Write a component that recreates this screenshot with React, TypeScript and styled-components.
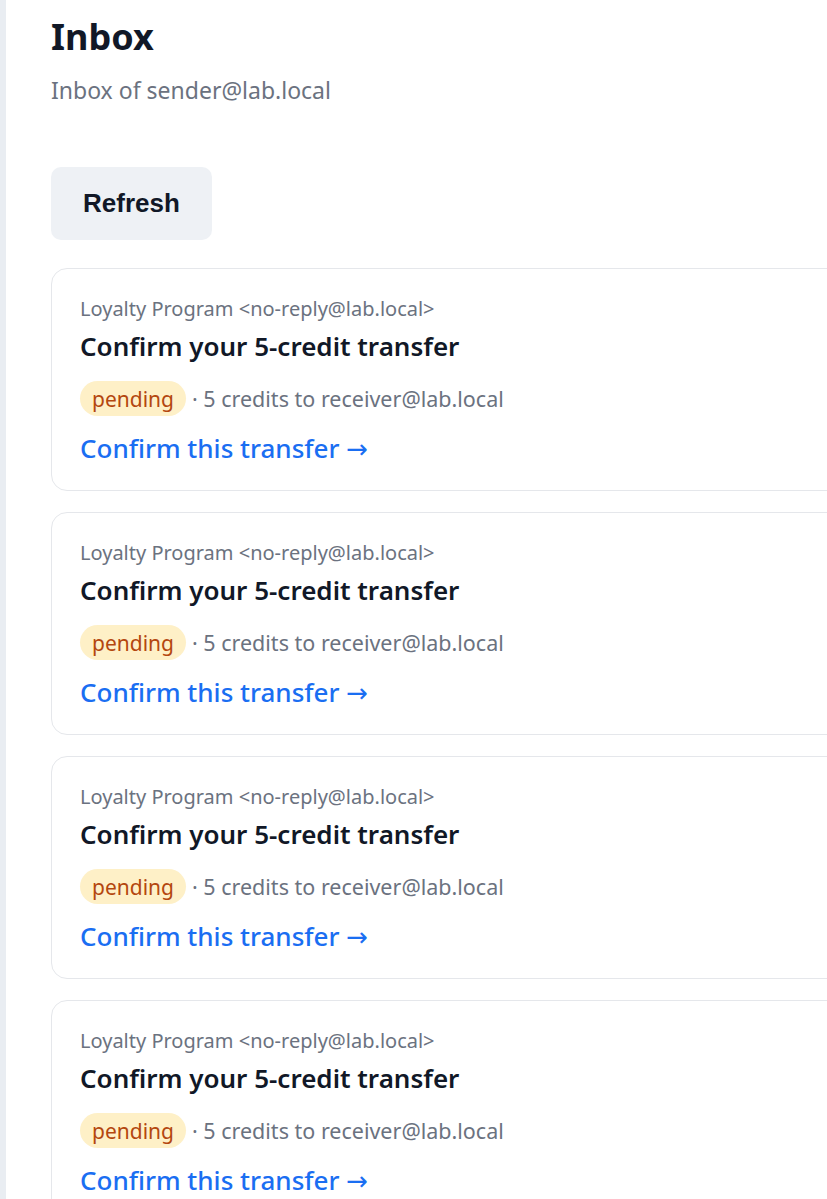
import React from 'react';
import styled, { createGlobalStyle } from 'styled-components';

interface Message {
  id: number;
  from: string;
  subject: string;
  status: string;
  summary: string;
}

const messages: Message[] = [1, 2, 3, 4].map((id) => ({
  id,
  from: 'Loyalty Program <no-reply@lab.local>',
  subject: 'Confirm your 5-credit transfer',
  status: 'pending',
  summary: '· 5 credits to receiver@lab.local',
}));

function App() {
  return (
    <>
      <GlobalStyle />
      <Page>
        <Rail />
        <Main>
          <Title>Inbox</Title>
          <Subtitle>Inbox of sender@lab.local</Subtitle>
          <RefreshButton type="button">Refresh</RefreshButton>
          <List>
            {messages.map((m) => (
              <Card key={m.id}>
                <From>{m.from}</From>
                <Subject>{m.subject}</Subject>
                <Meta>
                  <Badge>{m.status}</Badge>
                  <span>{m.summary}</span>
                </Meta>
                <ConfirmLink href="#">
                  Confirm this transfer <Arrow>→</Arrow>
                </ConfirmLink>
              </Card>
            ))}
          </List>
        </Main>
      </Page>
    </>
  );
}

export default App;

const GlobalStyle = createGlobalStyle`
  html, body {
    margin: 0;
    padding: 0;
    background: #ffffff;
    overflow: hidden;
  }
  body {
    font-family: "Noto Sans", "Open Sans", sans-serif;
    color: #111827;
  }
`;

const Page = styled.div`
  display: flex;
  min-height: 1199px;
`;

const Rail = styled.div`
  width: 6px;
  flex-shrink: 0;
  background: #e9edf2;
`;

const Main = styled.main`
  flex: 1;
  padding: 13px 0 0 45px;
  display: flex;
  flex-direction: column;
  align-items: flex-start;
`;

const Title = styled.h1`
  margin: 0;
  font-size: 36px;
  line-height: 48px;
  font-weight: 700;
  color: #111827;
`;

const Subtitle = styled.p`
  margin: 13px 0 0;
  font-size: 23px;
  line-height: 32px;
  color: #6b7280;
`;

const RefreshButton = styled.button`
  margin-top: 61px;
  width: 161px;
  height: 73px;
  border: none;
  border-radius: 10px;
  background: #eef1f5;
  font-family: "Liberation Sans", Arial, sans-serif;
  font-size: 26px;
  font-weight: 700;
  color: #111827;
  cursor: pointer;
`;

const List = styled.div`
  margin-top: 28px;
  display: flex;
  flex-direction: column;
  gap: 21px;
`;

const Card = styled.div`
  width: 820px;
  box-sizing: border-box;
  border: 1px solid #e5e7eb;
  border-radius: 16px;
  padding: 26px 28px 23px;
  display: flex;
  flex-direction: column;
  align-items: flex-start;
`;

const From = styled.div`
  font-size: 20px;
  line-height: 28px;
  color: #6b7280;
`;

const Subject = styled.div`
  margin-top: 6px;
  font-size: 26px;
  line-height: 34px;
  font-weight: 600;
  color: #111827;
`;

const Meta = styled.div`
  margin-top: 18px;
  display: flex;
  align-items: center;
  gap: 6px;
  height: 35px;
  font-size: 21.5px;
  color: #6b7280;
`;

const Badge = styled.span`
  display: inline-flex;
  align-items: center;
  height: 35px;
  padding: 0 12px;
  border-radius: 18px;
  background: #fef0c7;
  color: #b4470f;
  font-size: 21px;
`;

const ConfirmLink = styled.a`
  margin-top: 14px;
  font-size: 26px;
  line-height: 36px;
  font-weight: 500;
  color: #1a6ef2;
  text-decoration: none;
`;

const Arrow = styled.span`
  font-family: "DejaVu Sans", sans-serif;
  font-weight: 400;
  font-size: 26px;
`;
